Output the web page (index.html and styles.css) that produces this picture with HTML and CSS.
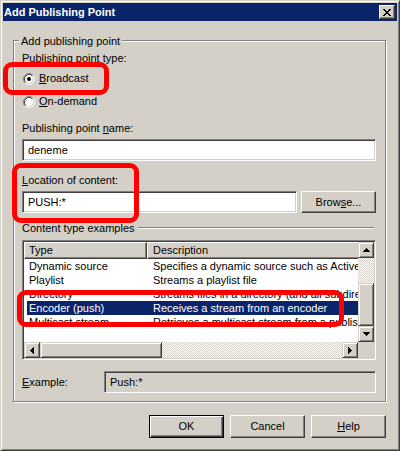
FILE: index.html
```html
<!DOCTYPE html>
<html>
<head>
<meta charset="utf-8">
<link rel="stylesheet" href="styles.css">
</head>
<body>
<div class="window">
  <div class="titlebar">
    <span class="title">Add Publishing Point</span>
    <span class="close"><svg width="8" height="7" viewBox="0 0 8 7"><path d="M0 0h2v1H0zM6 0h2v1H6zM1 1h2v1H1zM5 1h2v1H5zM2 2h4v1H2zM3 3h2v1H3zM2 4h4v1H2zM1 5h2v1H1zM5 5h2v1H5zM0 6h2v1H0zM6 6h2v1H6z" fill="#000"/></svg></span>
  </div>
  <div class="client">
    <div class="group">
      <div class="legend">Add publishing point</div>
      <div class="label l-type">Publishing point type:</div>
      <div class="radio r1">
        <svg width="12" height="12" viewBox="0 0 12 12"><circle cx="6" cy="6" r="4.5" fill="#fff"/><path d="M2.11 9.89A5.5 5.5 0 0 1 9.89 2.11" fill="none" stroke="#808080"/><path d="M9.89 2.11A5.5 5.5 0 0 1 2.11 9.89" fill="none" stroke="#fff"/><path d="M2.82 9.18A4.5 4.5 0 0 1 9.18 2.82" fill="none" stroke="#404040"/><path d="M9.18 2.82A4.5 4.5 0 0 1 2.82 9.18" fill="none" stroke="#d4d0c8"/><circle cx="6" cy="6" r="2" fill="#000"/></svg>
        <span><u>B</u>roadcast</span>
      </div>
      <div class="radio r2">
        <svg width="12" height="12" viewBox="0 0 12 12"><circle cx="6" cy="6" r="4.5" fill="#fff"/><path d="M2.11 9.89A5.5 5.5 0 0 1 9.89 2.11" fill="none" stroke="#808080"/><path d="M9.89 2.11A5.5 5.5 0 0 1 2.11 9.89" fill="none" stroke="#fff"/><path d="M2.82 9.18A4.5 4.5 0 0 1 9.18 2.82" fill="none" stroke="#404040"/><path d="M9.18 2.82A4.5 4.5 0 0 1 2.82 9.18" fill="none" stroke="#d4d0c8"/></svg>
        <span><u>O</u>n-demand</span>
      </div>
      <div class="label l-name">Publishing point <u>n</u>ame:</div>
      <div class="textbox tb-name">deneme</div>
      <div class="label l-loc"><u>L</u>ocation of content:</div>
      <div class="row-loc">
        <div class="textbox tb-loc">PUSH:*</div>
        <div class="btn">Brow<u>s</u>e...</div>
      </div>
      <div class="separator"><span>Content type examples</span><span class="sep-line"></span></div>
      <div class="listview">
        <div class="lv-main">
          <div class="lv-header"><div class="hd c1">Type</div><div class="hd c2">Description</div></div>
          <div class="lv-row"><span class="c1">Dynamic source</span><span class="c2">Specifies a dynamic source such as Active Server Pages</span></div>
          <div class="lv-row"><span class="c1">Playlist</span><span class="c2">Streams a playlist file</span></div>
          <div class="lv-row"><span class="c1">Directory</span><span class="c2">Streams files in a directory (and all subdirectories)</span></div>
          <div class="lv-row selected"><span class="c1">Encoder (push)</span><span class="c2">Receives a stream from an encoder</span></div>
          <div class="lv-row"><span class="c1">Multicast stream</span><span class="c2">Retrieves a multicast stream from a publishing point</span></div>
        </div>
        <div class="vscroll">
          <div class="sb-btn"><svg width="7" height="4" viewBox="0 0 7 4"><path d="M3 0h1v1h1v1h1v1h1v1H0V3h1V2h1V1h1V0z"/></svg></div>
          <div class="track"></div>
          <div class="thumb v-thumb"></div>
          <div class="sb-btn"><svg width="7" height="4" viewBox="0 0 7 4"><path d="M0 0h7v1h-1v1h-1v1h-1v1h-1v-1h-1v-1h-1v-1h-1z"/></svg></div>
        </div>
        <div class="hscroll">
          <div class="sb-btn"><svg width="4" height="7" viewBox="0 0 4 7"><path d="M3 0h1v7h-1v-1h-1v-1h-1v-1h-1v-1h1v-1h1v-1h1z"/></svg></div>
          <div class="thumb h-thumb"></div>
          <div class="track"></div>
          <div class="sb-btn"><svg width="4" height="7" viewBox="0 0 4 7"><path d="M0 0h1v1h1v1h1v1h1v1h-1v1h-1v1h-1v1h-1z"/></svg></div>
        </div>
        <div class="corner"></div>
      </div>
      <div class="example-row">
        <span><u>E</u>xample:</span>
        <div class="textbox readonly">Push:*</div>
      </div>
    </div>
    <div class="buttons">
      <div class="btn default">OK</div>
      <div class="btn">Cancel</div>
      <div class="btn"><u>H</u>elp</div>
    </div>
  </div>
  <div class="mark m1"></div>
  <div class="mark m2"></div>
  <div class="mark m3"></div>
</div>
</body>
</html>
```
FILE: styles.css
```css
html, body {
  margin: 0;
  background: #d4d0c8;
}
body {
  font: 11px/13px "Liberation Sans", Arial, sans-serif;
  color: #000;
}
.window {
  position: relative;
  width: 400px;
  height: 451px;
  box-sizing: border-box;
  border: 1px solid;
  border-color: #d4d0c8 #404040 #404040 #d4d0c8;
  box-shadow: inset 1px 1px #fff, inset -1px -1px #808080;
  padding: 2px;
  background: #d4d0c8;
}
.titlebar {
  height: 18px;
  background: #0a246a;
  display: flex;
  align-items: center;
  justify-content: space-between;
  padding: 0 2px 0 1px;
}
.title {
  color: #fff;
  font-weight: bold;
  font-size: 11px;
}
.close {
  width: 16px;
  height: 14px;
  box-sizing: border-box;
  background: #d4d0c8;
  border: 1px solid;
  border-color: #fff #404040 #404040 #fff;
  box-shadow: inset -1px -1px #808080;
  display: flex;
  align-items: center;
  justify-content: center;
}
.close svg { display: block; }
.client {
  padding: 19px 11px 0 10px;
}
.group {
  border: 1px solid #808080;
  box-shadow: inset 1px 1px #fff, 1px 1px #fff;
  padding: 0 9px 8px 8px;
}
.legend {
  width: max-content;
  margin: -6px 0 0 -3px;
  padding: 0 2px;
  background: #d4d0c8;
}
.label { height: 13px; white-space: nowrap; }
.l-type { margin-top: 4px; }
.radio {
  display: flex;
  align-items: center;
  height: 13px;
  gap: 4px;
  padding-left: 1px;
}
.radio svg { display: block; }
.r1 { margin-top: 7px; }
.r2 { margin-top: 10px; }
.l-name { margin-top: 14px; }
.textbox {
  height: 22px;
  box-sizing: border-box;
  border: 1px solid;
  border-color: #808080 #fff #fff #808080;
  box-shadow: inset 1px 1px #404040, inset -1px -1px #d4d0c8;
  background: #fff;
  padding: 0 5px;
  line-height: 20px;
  white-space: nowrap;
}
.tb-name { margin-top: 4px; }
.l-loc { margin-top: 13px; }
.row-loc {
  display: flex;
  gap: 4px;
  margin-top: 4px;
}
.tb-loc { flex: 1; }
.btn {
  width: 75px;
  height: 22px;
  box-sizing: border-box;
  border: 1px solid;
  border-color: #fff #404040 #404040 #fff;
  box-shadow: inset -1px -1px #808080;
  background: #d4d0c8;
  display: flex;
  align-items: center;
  justify-content: center;
}
.separator {
  display: flex;
  margin-top: 9px;
  height: 13px;
  white-space: nowrap;
}
.sep-line {
  flex: 1;
  height: 0;
  margin: 5px 2px 0 3px;
  border-top: 1px solid #808080;
  border-bottom: 1px solid #fff;
}
.listview {
  margin-top: 5px;
  height: 120px;
  box-sizing: border-box;
  border: 1px solid;
  border-color: #808080 #fff #fff #808080;
  box-shadow: inset 1px 1px #404040, inset -1px -1px #d4d0c8;
  padding: 1px;
  display: grid;
  grid-template-columns: minmax(0, 1fr) 16px;
  grid-template-rows: minmax(0, 1fr) 16px;
  background: #fff;
}
.lv-main {
  overflow: hidden;
  background: #fff;
}
.lv-header {
  display: flex;
  height: 17px;
  white-space: nowrap;
}
.hd {
  box-sizing: border-box;
  background: #d4d0c8;
  border: 1px solid;
  border-color: #fff #404040 #404040 #fff;
  box-shadow: inset -1px -1px #808080;
  line-height: 14px;
  flex: none;
}
.hd.c1 { width: 123px; padding-left: 4px; }
.hd.c2 { width: 400px; padding-left: 5px; }
.lv-row {
  display: flex;
  height: 14px;
  line-height: 14px;
  white-space: nowrap;
}
.lv-row .c1 {
  width: 123px;
  box-sizing: border-box;
  padding-left: 5px;
  flex: none;
}
.lv-row .c2 {
  padding-left: 6px;
  flex: none;
}
.lv-row.selected {
  background: #0a246a;
  color: #fff;
  margin-left: 3px;
}
.lv-row.selected .c1 { width: 120px; padding-left: 2px; }
.vscroll {
  display: flex;
  flex-direction: column;
}
.hscroll {
  display: flex;
}
.sb-btn {
  width: 16px;
  height: 16px;
  flex: none;
  box-sizing: border-box;
  background: #d4d0c8;
  border: 1px solid;
  border-color: #d4d0c8 #404040 #404040 #d4d0c8;
  box-shadow: inset 1px 1px #fff, inset -1px -1px #808080;
  display: flex;
  align-items: center;
  justify-content: center;
}
.sb-btn svg { display: block; fill: #000; }
.track {
  flex: 1;
  background: repeating-conic-gradient(#fff 0 25%, #d4d0c8 0 50%) 0 0 / 2px 2px;
}
.thumb {
  flex: none;
  box-sizing: border-box;
  background: #d4d0c8;
  border: 1px solid;
  border-color: #d4d0c8 #404040 #404040 #d4d0c8;
  box-shadow: inset 1px 1px #fff, inset -1px -1px #808080;
}
.v-thumb { height: 43px; }
.h-thumb { width: 122px; }
.corner { background: #d4d0c8; }
.example-row {
  margin-top: 11px;
  display: grid;
  grid-template-columns: 82px 1fr;
  align-items: center;
}
.textbox.readonly {
  background: #d4d0c8;
}
.buttons {
  display: flex;
  justify-content: flex-end;
  gap: 6px;
  margin-top: 13px;
}
.buttons .btn { height: 23px; }
.btn.default {
  border-color: #000;
  box-shadow: inset 1px 1px #fff, inset -1px -1px #404040, inset -2px -2px #808080;
}
.mark {
  position: absolute;
  box-sizing: border-box;
  border: 5px solid #f00;
  border-radius: 9px;
}
.m1 { left: 2px; top: 61px; width: 106px; height: 33px; }
.m2 { left: 11px; top: 162px; width: 127px; height: 60px; }
.m3 { left: 16px; top: 289px; width: 327px; height: 37px; }
```
